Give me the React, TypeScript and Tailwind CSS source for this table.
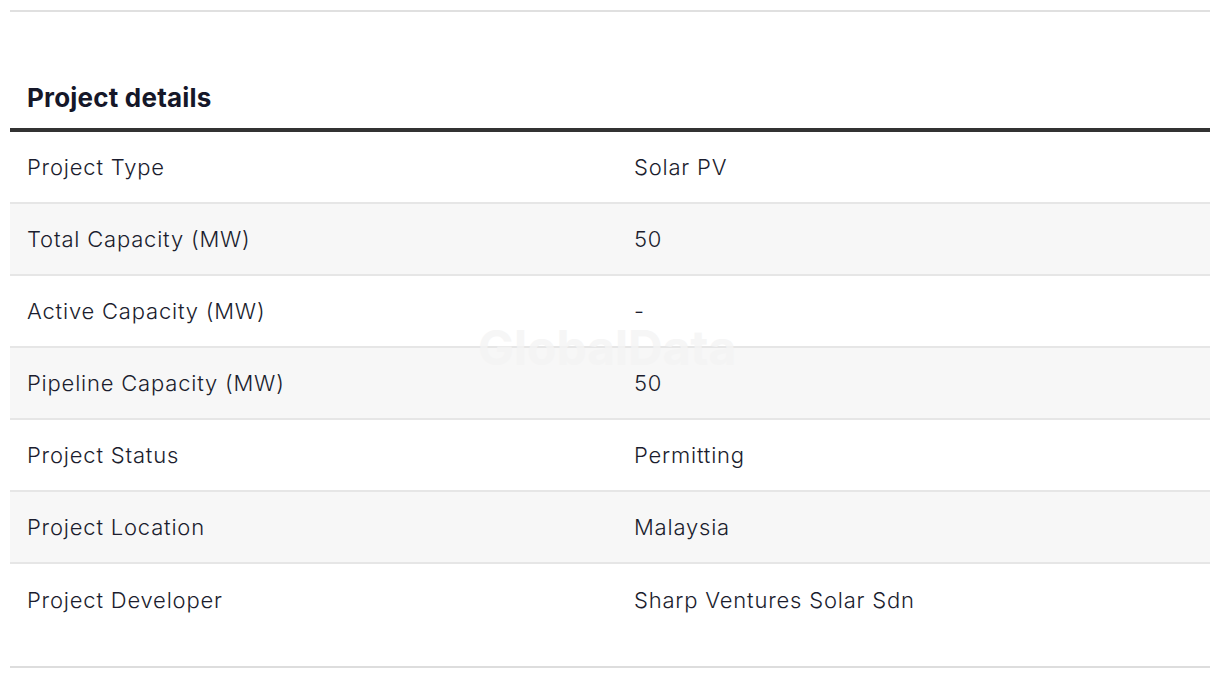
const rows: [string, string][] = [
  ["Project Type", "Solar PV"],
  ["Total Capacity (MW)", "50"],
  ["Active Capacity (MW)", "-"],
  ["Pipeline Capacity (MW)", "50"],
  ["Project Status", "Permitting"],
  ["Project Location", "Malaysia"],
  ["Project Developer", "Sharp Ventures Solar Sdn"],
];

export default function App() {
  return (
    <div
      className="min-h-[678px] bg-white px-[10px] pt-[10px]"
      style={{ fontFamily: "Inter, 'Liberation Sans', sans-serif" }}
    >
      <div className="border-t-2 border-[#e0e0e0]" />
      <h2 className="pl-[17px] pt-[70px] pb-[14px] text-[26px] font-bold leading-[32px] tracking-[0.2px] text-[#151729]">
        Project details
      </h2>
      <div className="relative border-t-4 border-[#333333]">
        {rows.map(([label, value], i) => (
          <div
            key={label}
            className={`grid h-[72px] grid-cols-[607px_1fr] items-center text-[22px] font-light tracking-[0.8px] text-[#1b1d2e] ${
              i % 2 === 1 ? "bg-[#f7f7f7]" : "bg-white"
            } ${i < rows.length - 1 ? "border-b-2 border-[#e6e6e6]" : ""}`}
          >
            <div className="pl-[17px]">{label}</div>
            <div className="pl-[17px]">{value}</div>
          </div>
        ))}
        <div className="pointer-events-none absolute left-[468px] top-[180px] select-none text-[48px] font-bold text-[#f4f4f4] opacity-80">
          GlobalData
        </div>
      </div>
      <div className="mt-[30px] border-t-2 border-[#dddddd]" />
    </div>
  );
}
